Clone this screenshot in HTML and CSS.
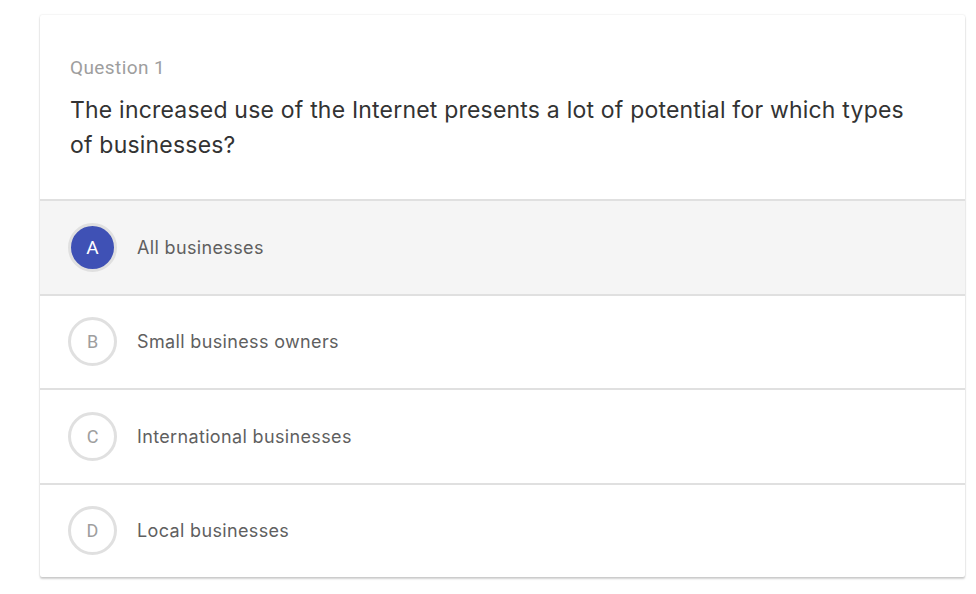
FILE: index.html
```html
<!DOCTYPE html>
<html lang="en">
<head>
<meta charset="utf-8">
<title>Question 1</title>
<link rel="stylesheet" href="styles.css">
</head>
<body>
<main class="page">
  <section class="card">
    <header class="card-head">
      <div class="q-label">Question 1</div>
      <h1 class="q-text">The increased use of the Internet presents a lot of potential for which types of businesses?</h1>
    </header>
    <ul class="options">
      <li class="option selected"><span class="badge">A</span><span class="opt-text">All businesses</span></li>
      <li class="option"><span class="badge">B</span><span class="opt-text">Small business owners</span></li>
      <li class="option"><span class="badge">C</span><span class="opt-text">International businesses</span></li>
      <li class="option"><span class="badge">D</span><span class="opt-text">Local businesses</span></li>
    </ul>
  </section>
</main>
</body>
</html>
```
FILE: styles.css
```css
html, body {
  margin: 0;
  padding: 0;
  background: #ffffff;
}
.page {
  padding: 15px 11px 16px 40px;
}
.card {
  background: #fff;
  border-radius: 2px;
  box-shadow: 0 2px 2px rgba(0,0,0,0.18), 0 0 2px rgba(0,0,0,0.14);
  overflow: hidden;
}
.card-head {
  padding: 41px 50px 36px 30px;
  border-bottom: 2px solid #e0e0e0;
}
.q-label {
  font-family: Roboto, "Liberation Sans", sans-serif;
  font-size: 19px;
  line-height: 24px;
  color: #9e9e9e;
  letter-spacing: 0.4px;
  margin-bottom: 13px;
}
.q-text {
  margin: 0;
  font-family: Inter, "Open Sans", sans-serif;
  font-weight: 400;
  font-size: 23px;
  line-height: 35px;
  color: #333;
  letter-spacing: 0.2px;
}
.options {
  list-style: none;
  margin: 0;
  padding: 0;
}
.option {
  display: flex;
  align-items: center;
  gap: 20px;
  height: 92.5px;
  padding-left: 28px;
  border-bottom: 2px solid #e0e0e0;
}
.option:last-child {
  border-bottom: none;
  height: 92px;
}
.option.selected {
  background: #f5f5f5;
}
.badge {
  box-sizing: border-box;
  width: 49px;
  height: 49px;
  border-radius: 50%;
  border: 3px solid #e0e0e0;
  display: flex;
  align-items: center;
  justify-content: center;
  font-family: Roboto, "Liberation Sans", sans-serif;
  font-size: 18px;
  color: #9e9e9e;
  background: #fff;
}
.selected .badge {
  background: #3f51b5;
  color: #fff;
  font-size: 19px;
}
.opt-text {
  font-family: Inter, "Open Sans", sans-serif;
  font-size: 18px;
  color: #5f5f5f;
  letter-spacing: 0.35px;
}
```
